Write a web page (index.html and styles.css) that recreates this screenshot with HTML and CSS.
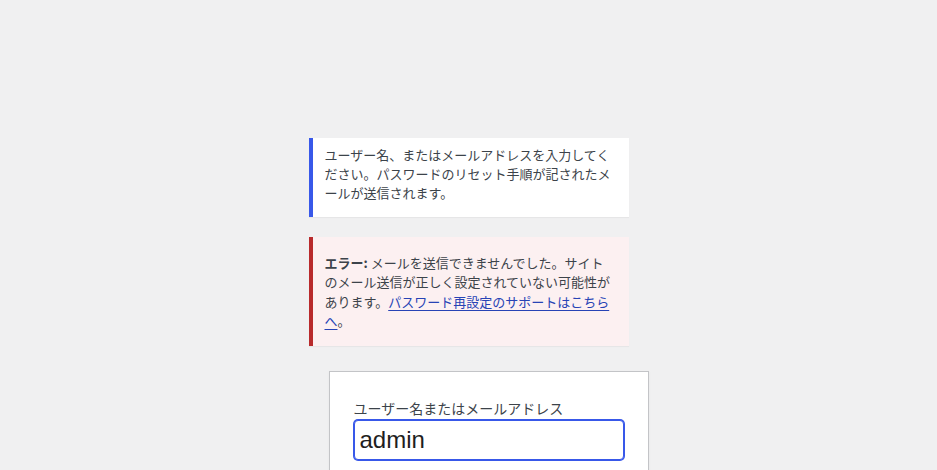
FILE: index.html
```html
<!DOCTYPE html>
<html lang="ja">
<head>
<meta charset="utf-8">
<title>パスワードをリセット</title>
<link rel="stylesheet" href="styles.css">
</head>
<body>
<div class="login">
  <div class="notice notice-info">ユーザー名、またはメールアドレスを入力してください。パスワードのリセット手順が記されたメールが送信されます。</div>
  <div class="notice notice-error"><p><strong>エラー:</strong> メールを送信できませんでした。サイトのメール送信が正しく設定されていない可能性があります。<a href="#">パスワード再設定のサポートはこちらへ</a>。</p></div>
  <form class="form">
    <label class="label" for="user_login">ユーザー名またはメールアドレス</label>
    <input class="input" id="user_login" type="text" value="admin">
  </form>
</div>
</body>
</html>
```
FILE: styles.css
```css
html, body {
  margin: 0;
  padding: 0;
}
body {
  background: #f0f0f1;
  color: #3c434a;
  font-family: "Noto Sans CJK JP", "Noto Sans", sans-serif;
  font-size: 13px;
  line-height: 1.4;
}
.login {
  width: 320px;
  margin: 0 auto;
  padding-top: 138px;
}
.notice {
  background: #fff;
  border-left: 4px solid #3858e9;
  padding: 12px;
  margin: 0 0 20px 0;
  box-shadow: 0 1px 1px 0 rgba(0,0,0,.04);
}
.notice-info {
  line-height: 1.45;
  padding-top: 8px;
  padding-bottom: 14px;
}
.notice-error {
  background: #fcf0f1;
  border-left-color: #b82a2c;
  padding-top: 12px;
  padding-bottom: 12px;
}
.notice-error p {
  margin: 4px 0 3px;
  line-height: 1.5;
}
.notice-error strong {
  font-weight: 700;
}
.notice-error a {
  color: #2743b5;
  text-decoration: underline;
  text-underline-offset: 3px;
}
.form {
  box-sizing: border-box;
  width: 320px;
  margin: 25px 0 0 20px;
  background: #fff;
  border: 1px solid #c3c4c7;
  padding: 26px 24px;
  box-shadow: 0 1px 3px rgba(0,0,0,.04);
}
.label {
  display: block;
  font-size: 14px;
  line-height: 1.5;
  margin-bottom: 1px;
}
.input {
  display: block;
  box-sizing: border-box;
  width: 100%;
  min-height: 40px;
  font-family: "Liberation Sans", Arial, sans-serif;
  font-size: 24px;
  line-height: 1.33333;
  padding: 3px 5px;
  margin: 0;
  color: #1e1e1e;
  background: #fff;
  border: 1px solid #3858e9;
  border-radius: 4px;
  box-shadow: 0 0 0 1px #3858e9;
  outline: none;
}
```
